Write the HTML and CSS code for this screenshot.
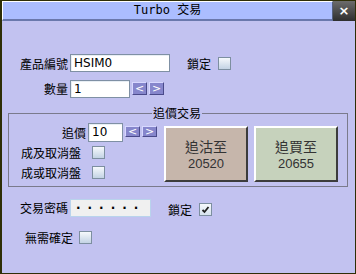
FILE: index.html
```html
<!DOCTYPE html>
<html lang="zh-Hant">
<head>
    <meta charset="UTF-8">
    <title>Turbo 交易</title>
    <link rel="stylesheet" href="styles.css">
</head>
<body>
    <div class="dialog">
        <div class="title-bar">
            <span class="title">Turbo 交易</span>
            <a href="#" class="close-button">×</a>
        </div>

        <div class="dialog-body">
            <div class="row row-product">
                <label class="label">產品編號</label>
                <div class="text-field wide">HSIM0</div>
                <span class="lock-label">鎖定</span>
                <span class="checkbox"></span>
            </div>

            <div class="row row-qty">
                <label class="label">數量</label>
                <div class="text-field qty">1</div>
                <a href="#" class="step-button">&lt;</a>
                <a href="#" class="step-button">&gt;</a>
            </div>

            <fieldset class="chase-box">
                <legend>追價交易</legend>
                <div class="chase-content">
                    <div class="chase-options">
                        <div class="row row-chase">
                            <label class="chase-label">追價</label>
                            <div class="text-field ticks">10</div>
                            <a href="#" class="step-button small">&lt;</a>
                            <a href="#" class="step-button small">&gt;</a>
                        </div>
                        <div class="row option-row">
                            <span class="option-label">成及取消盤</span>
                            <span class="checkbox"></span>
                        </div>
                        <div class="row option-row">
                            <span class="option-label">成或取消盤</span>
                            <span class="checkbox"></span>
                        </div>
                    </div>
                    <button class="chase-button sell">
                        <span class="chase-title">追沽至</span>
                        <span class="chase-price">20520</span>
                    </button>
                    <button class="chase-button buy">
                        <span class="chase-title">追買至</span>
                        <span class="chase-price">20655</span>
                    </button>
                </div>
            </fieldset>

            <div class="row row-password">
                <label class="label">交易密碼</label>
                <div class="text-field password">······</div>
                <span class="lock-group">
                    <span class="lock-label">鎖定</span>
                    <span class="checkbox checked">
                        <svg width="11" height="11" viewBox="0 0 11 11">
                            <path d="M2.5 6 L4.5 8 L8.5 3" fill="none" stroke="#202020" stroke-width="1.8"/>
                        </svg>
                    </span>
                </span>
            </div>

            <div class="row row-confirm">
                <span class="confirm-label">無需確定</span>
                <span class="checkbox"></span>
            </div>
        </div>
    </div>
</body>
</html>
```

FILE: styles.css
```css
body {
    margin: 0;
    font-family: "Noto Sans CJK TC", "DejaVu Sans", sans-serif;
    font-size: 12px;
    color: #000;
}

.dialog {
    width: 356px;
    height: 274px;
    box-sizing: border-box;
    border: 1px solid #2e2e06;
    border-left-width: 2px;
    background-color: #c2c2f0;
    display: flex;
    flex-direction: column;
}

.title-bar {
    display: flex;
    height: 20px;
}

.title {
    flex: 1;
    background: #abbdff;
    border-top: 1px solid #ffffff;
    border-left: 1px solid #ffffff;
    border-right: 1px solid #55607e;
    border-bottom: 2px solid #6a78ac;
    text-align: center;
    font-family: "DejaVu Sans Mono", "Noto Sans CJK TC", monospace;
    font-size: 12px;
    line-height: 17px;
}

.close-button {
    width: 22px;
    background: linear-gradient(#6c6c6c, #2e2e2e);
    color: #ffffff;
    font-family: "DejaVu Sans", sans-serif;
    font-size: 13px;
    font-weight: bold;
    line-height: 19px;
    text-align: center;
    text-decoration: none;
}

.dialog-body {
    display: flex;
    flex-direction: column;
}

.row {
    display: flex;
    align-items: center;
}

.label {
    width: 66px;
    margin-right: 2px;
    text-align: right;
}

.text-field {
    box-sizing: border-box;
    height: 18px;
    background: #ffffff;
    border: 1px solid #7f90a4;
    box-shadow: inset 1px 1px 0 #e8eef4;
    padding-left: 3px;
    font-family: "DejaVu Sans", sans-serif;
    font-size: 12px;
    line-height: 16px;
}

.wide {
    width: 100px;
}

.qty {
    width: 60px;
}

.ticks {
    width: 35px;
    height: 19px;
    line-height: 17px;
}

.password {
    width: 81px;
    background: #f0f0f0;
    border-color: #b9d3ec;
    box-shadow: none;
    padding-left: 5px;
    font-weight: bold;
    letter-spacing: 7px;
}

.row-product {
    margin-top: 33px;
}

.row-qty {
    margin-top: 8px;
    align-items: flex-start;
}

.lock-label {
    margin-left: 17px;
    margin-right: 7px;
}

.checkbox {
    box-sizing: border-box;
    width: 13px;
    height: 13px;
    border: 1px solid #7d8fa0;
    background: linear-gradient(#f6f9fc, #c3d3e4);
    display: flex;
    align-items: center;
    justify-content: center;
}

.checkbox svg {
    display: block;
}

.step-button {
    box-sizing: border-box;
    width: 15px;
    height: 13px;
    margin-top: 2px;
    margin-left: 2px;
    background: #8686cc;
    border: 1px solid;
    border-color: #d8d8ff #4a4a8a #4a4a8a #d8d8ff;
    color: #ffffff;
    font-family: "DejaVu Sans", sans-serif;
    font-size: 11px;
    line-height: 11px;
    text-align: center;
    text-decoration: none;
}

.step-button.small {
    height: 11px;
    line-height: 9px;
    margin-top: 3px;
}

.step-button + .step-button {
    margin-left: 2px;
}

.chase-box {
    margin: 8px 0 0 6px;
    padding: 0;
    width: 340px;
    box-sizing: border-box;
    border: 1px solid #7a7a8c;
}

.chase-box legend {
    margin-left: 143px;
    padding: 0 1px;
    line-height: 14px;
}

.chase-content {
    display: flex;
    height: 66px;
}

.chase-options {
    width: 155px;
    padding-top: 3px;
}

.row-chase {
    align-items: flex-start;
    height: 19px;
}

.chase-label {
    width: 77px;
    margin-right: 2px;
    text-align: right;
    line-height: 19px;
}

.option-row {
    height: 20px;
}

.option-row:first-of-type {
    margin-top: 1px;
}

.option-label {
    margin-left: 12px;
    width: 60px;
    margin-right: 11px;
}

.chase-button {
    box-sizing: border-box;
    width: 84px;
    height: 56px;
    margin-top: 6px;
    border: 2px solid;
    border-color: #ffffff #3c3c3c #3c3c3c #ffffff;
    color: #333333;
    display: flex;
    flex-direction: column;
    align-items: center;
    justify-content: center;
    gap: 3px;
    padding: 0;
    font-family: "Noto Sans CJK TC", sans-serif;
}

.chase-button.sell {
    background: #c6b6ab;
}

.chase-button.buy {
    background: #c6d2bc;
    margin-left: 6px;
}

.chase-title {
    font-size: 14px;
    line-height: 16px;
}

.chase-price {
    font-family: "Liberation Sans", sans-serif;
    font-size: 13px;
    line-height: 14px;
}

.row-password {
    margin-top: 10px;
}

.lock-group {
    display: flex;
    align-items: center;
    margin-top: 4px;
}

.checked {
    background: linear-gradient(#f6f9fc, #d6e2ee);
}

.row-confirm {
    margin-top: 11px;
    padding-left: 23px;
}

.confirm-label {
    width: 48px;
    margin-right: 6px;
}
```
